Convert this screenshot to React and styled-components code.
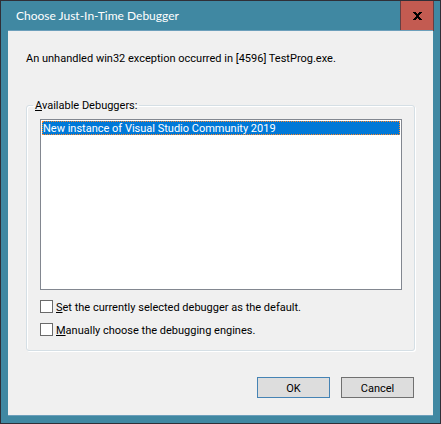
import React from "react";
import styled, { createGlobalStyle } from "styled-components";

const GlobalStyle = createGlobalStyle`
  * { box-sizing: border-box; }
  body { margin: 0; background: #4088a2; }
`;

const Dialog = styled.div`
  display: flex;
  flex-direction: column;
  min-height: 100vh;
  padding-bottom: 7px;
  border: 1px solid #302f37;
  background: #4088a2;
  color: #000;
  font: 11px/14px Roboto, Tahoma, sans-serif;
`;

const TitleBar = styled.header`
  display: flex;
  align-items: stretch;
  justify-content: space-between;
  height: 30px;
  padding: 0 6px 0 15px;
`;

const Title = styled.h1`
  margin: 0;
  color: #fff;
  font: 12px/29px Lato, "Segoe UI", sans-serif;
`;

const CloseButton = styled.button`
  display: flex;
  align-items: center;
  justify-content: center;
  width: 34px;
  padding: 0;
  border: 1px solid #633f43;
  border-top: 0;
  background: #c35b51;
`;

const Client = styled.main`
  display: flex;
  flex: 1;
  flex-direction: column;
  margin: -1px 7px 0;
  padding: 21px 18px 17px;
  border: solid #6c9fbb;
  border-width: 1px 0;
  background: #f0f0f0;
`;

const Message = styled.p`
  margin: 0 0 31px;
`;

const Group = styled.fieldset`
  min-width: 0;
  margin: 0;
  padding: 6px 12px 14px 13px;
  border: 1px solid #d5dfe5;
  border-radius: 3px;
  box-shadow: 1px 1px 0 #fff, inset 1px 1px 0 #fff;
`;

const Legend = styled.legend`
  margin-left: -7px;
  padding: 2px 2px 0;
`;

const DebuggerList = styled.select`
  display: block;
  width: 100%;
  height: 171px;
  padding: 1px;
  border: 1px solid #828790;
  border-radius: 0;
  outline: 0;
  background: #fff;
  font: inherit;
  overflow: hidden;
`;

const DebuggerOption = styled.option`
  min-height: 13px;
  padding: 1px 1px 0;
  line-height: 13px;

  &:checked {
    outline: 1px dotted #ff8728;
    outline-offset: -1px;
    background: linear-gradient(#0078d7, #0078d7);
    -webkit-text-fill-color: #fff;
  }
`;

const CheckRow = styled.label`
  display: flex;
  align-items: center;
  gap: 3px;
  height: 13px;
  margin-top: 10px;
  white-space: nowrap;
`;

const CheckText = styled.span`
  padding-top: 2px;
`;

const CheckBox = styled.input`
  appearance: none;
  flex: none;
  width: 13px;
  height: 13px;
  margin: 0;
  border: 1px solid #6a6a6a;
  background: #fff;

  &:checked {
    background: #333;
    box-shadow: inset 0 0 0 2px #fff;
  }
`;

const Actions = styled.footer`
  display: flex;
  justify-content: flex-end;
  gap: 11px;
  margin-top: auto;
  padding: 25px 1px 0 0;
`;

const Button = styled.button`
  width: 73px;
  height: 21px;
  padding: 2px 0 0;
  border: 1px solid ${(p) => (p.$primary ? "#4583b4" : "#707070")};
  background: #ddd;
  color: #000;
  font: inherit;
`;

export default function App() {
  return (
    <>
      <GlobalStyle />
      <Dialog role="dialog" aria-labelledby="title">
        <TitleBar>
          <Title id="title">Choose Just-In-Time Debugger</Title>
          <CloseButton type="button" aria-label="Close">
            <svg width="9" height="8" viewBox="0 0 9 8" shapeRendering="crispEdges">
              <path
                d="M0 0h3v1H0zM6 0h3v1H6zM1 1h3v1H1zM5 1h3v1H5zM2 2h5v1H2zM3 3h3v2H3zM2 5h5v1H2zM1 6h3v1H1zM5 6h3v1H5zM0 7h3v1H0zM6 7h3v1H6z"
                fill="#000"
              />
            </svg>
          </CloseButton>
        </TitleBar>
        <Client>
          <Message>An unhandled win32 exception occurred in [4596] TestProg.exe.</Message>
          <Group>
            <Legend>
              <label htmlFor="debuggers">
                <u>A</u>vailable Debuggers:
              </label>
            </Legend>
            <DebuggerList id="debuggers" size={12} defaultValue="vs2019">
              <DebuggerOption value="vs2019">
                New instance of Visual Studio Community 2019
              </DebuggerOption>
            </DebuggerList>
            <CheckRow>
              <CheckBox type="checkbox" />
              <CheckText>
                <u>S</u>et the currently selected debugger as the default.
              </CheckText>
            </CheckRow>
            <CheckRow>
              <CheckBox type="checkbox" />
              <CheckText>
                <u>M</u>anually choose the debugging engines.
              </CheckText>
            </CheckRow>
          </Group>
          <Actions>
            <Button type="button" $primary>
              OK
            </Button>
            <Button type="button">Cancel</Button>
          </Actions>
        </Client>
      </Dialog>
    </>
  );
}
